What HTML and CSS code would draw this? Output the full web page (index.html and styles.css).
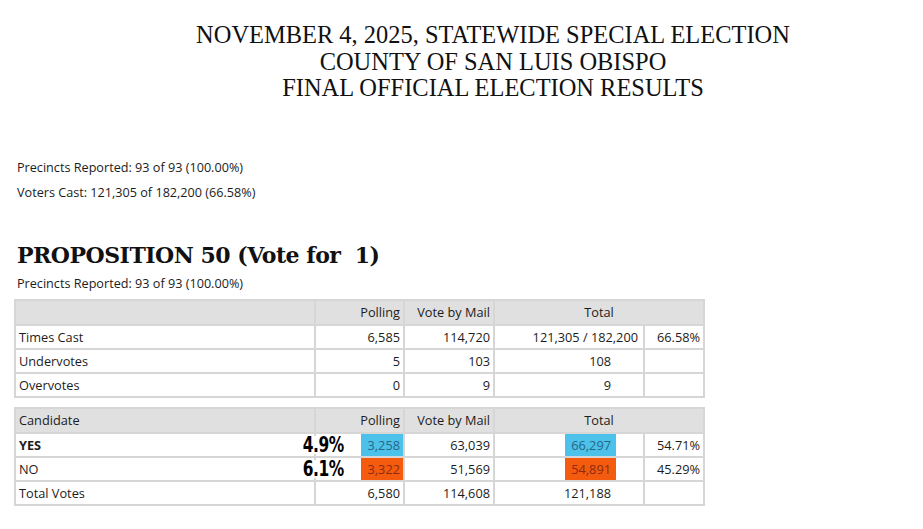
FILE: index.html
```html
<!DOCTYPE html>
<html>
<head>
<meta charset="utf-8">
<link rel="stylesheet" href="styles.css">
</head>
<body>
<div class="page">
  <header class="title">
    <div>NOVEMBER 4, 2025, STATEWIDE SPECIAL ELECTION</div>
    <div>COUNTY OF SAN LUIS OBISPO</div>
    <div>FINAL OFFICIAL ELECTION RESULTS</div>
  </header>

  <section class="summary">
    <p>Precincts Reported: 93 of 93 (100.00%)</p>
    <p>Voters Cast: 121,305 of 182,200 (66.58%)</p>
  </section>

  <h2 class="contest">PROPOSITION 50 (Vote for&nbsp; 1)</h2>
  <p class="contest-sub">Precincts Reported: 93 of 93 (100.00%)</p>

  <table class="results">
    <colgroup>
      <col class="c-name"><col class="c-poll"><col class="c-mail"><col class="c-total"><col class="c-pct">
    </colgroup>
    <tr class="head"><td></td><td class="r">Polling</td><td class="r">Vote by Mail</td><td class="c" colspan="2">Total</td></tr>
    <tr><td>Times Cast</td><td class="r">6,585</td><td class="r">114,720</td><td class="r tot-wide">121,305 / 182,200</td><td class="r">66.58%</td></tr>
    <tr><td>Undervotes</td><td class="r">5</td><td class="r">103</td><td class="r tot">108</td><td></td></tr>
    <tr><td>Overvotes</td><td class="r">0</td><td class="r">9</td><td class="r tot">9</td><td></td></tr>
  </table>

  <table class="results second">
    <colgroup>
      <col class="c-name"><col class="c-poll"><col class="c-mail"><col class="c-total"><col class="c-pct">
    </colgroup>
    <tr class="head"><td>Candidate</td><td class="r">Polling</td><td class="r">Vote by Mail</td><td class="c" colspan="2">Total</td></tr>
    <tr><td><div class="namecell"><b>YES</b><span class="note">4.9%</span></div></td><td class="r"><span class="hl blue poll">3,258</span></td><td class="r">63,039</td><td class="r tot"><span class="hl blue total">66,297</span></td><td class="r">54.71%</td></tr>
    <tr><td><div class="namecell"><span>NO</span><span class="note">6.1%</span></div></td><td class="r"><span class="hl orange poll">3,322</span></td><td class="r">51,569</td><td class="r tot"><span class="hl orange total">54,891</span></td><td class="r">45.29%</td></tr>
    <tr><td>Total Votes</td><td class="r">6,580</td><td class="r">114,608</td><td class="r tot">121,188</td><td></td></tr>
  </table>
</div>
</body>
</html>
```

FILE: styles.css
```css
html, body {
  margin: 0;
  padding: 0;
  background: #ffffff;
}

.page {
  width: 923px;
  height: 529px;
  overflow: hidden;
  font-family: "Open Sans", "Noto Sans", sans-serif;
  color: #1c1c1c;
}

.title {
  margin: 22px 0 0 0;
  padding-left: 63px;
  text-align: center;
  font-family: "Liberation Serif", "DejaVu Serif", serif;
  font-size: 24.45px;
  line-height: 26.5px;
  color: #111;
}

.summary {
  margin: 53px 0 0 17px;
}

.summary p,
.contest-sub {
  margin: 0;
  font-size: 12.65px;
  line-height: 25px;
}

.contest {
  margin: 35px 0 0 17px;
  font-family: "DejaVu Serif", "Liberation Serif", serif;
  font-weight: bold;
  font-size: 22px;
  line-height: 30px;
  letter-spacing: -0.5px;
  color: #111;
}

.contest-sub {
  margin-left: 17px;
  margin-top: 1px;
}

.results {
  margin: 3px 0 0 14px;
  border-collapse: collapse;
  table-layout: fixed;
  width: 689px;
  font-size: 12.75px;
}

.results.second {
  margin-top: 9px;
}

.c-name { width: 300px; }
.c-poll { width: 89px; }
.c-mail { width: 90px; }
.c-total { width: 150px; }
.c-pct { width: 60px; }

.results td {
  border: 2px solid #d6d6d6;
  height: 22px;
  padding: 0 3px;
  line-height: 22px;
  white-space: nowrap;
}

.results .head td {
  background: #e0e0e0;
  height: 23px;
}

.results td.r { text-align: right; }
.results td.c { text-align: center; }
.results td.tot { padding-right: 32px; }
.results td.tot-wide { padding-right: 5px; }

.namecell {
  position: relative;
}

.note {
  position: absolute;
  right: -33px;
  top: 2px;
  background: #ffffff;
  font-family: "DejaVu Sans", sans-serif;
  font-stretch: condensed;
  font-weight: bold;
  font-size: 22px;
  line-height: 18px;
  color: #000;
  letter-spacing: -0.5px;
  transform: scaleX(0.78);
  transform-origin: right center;
}

.hl {
  display: inline-block;
  height: 22px;
  line-height: 22px;
  vertical-align: top;
}

.hl.poll {
  margin-right: -3px;
  padding: 0 3px 0 7px;
}

.hl.total {
  margin-right: -5px;
  padding: 0 5px 0 6px;
}

.hl.blue {
  background: #4cc2ea;
  color: #2a6585;
}

.hl.orange {
  background: #f45b0e;
  color: #8c2c12;
}
```
